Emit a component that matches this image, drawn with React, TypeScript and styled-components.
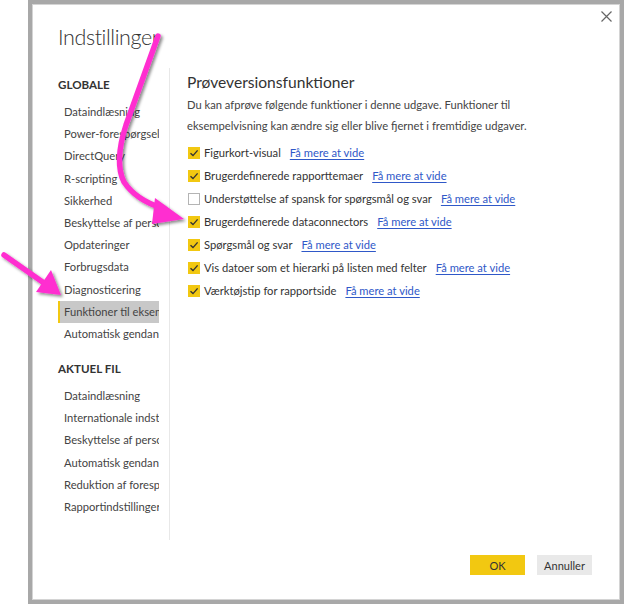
import React from "react";
import styled, { createGlobalStyle } from "styled-components";

const Global = createGlobalStyle`
  html, body { margin: 0; padding: 0; background: #ffffff; }
  body { font-family: "Lato", "Open Sans", sans-serif; color: #333; }
  * { box-sizing: border-box; }
`;

const Page = styled.div`
  position: relative;
  width: 624px;
  height: 605px;
  display: flex;
  align-items: flex-start;
  padding-left: 28px;
  overflow: hidden;
`;

const Dialog = styled.div`
  width: 596px;
  height: 604px;
  border: 4px solid #a8a8a8;
  box-shadow: inset 1px 1px 0 #d4d4d4, inset -1px -1px 0 #d4d4d4;
  background: #fff;
  display: flex;
  flex-direction: column;
`;

const Header = styled.div`
  display: flex;
  justify-content: space-between;
  align-items: flex-start;
  padding: 0 8px 0 26px;
  height: 64px;
`;

const Title = styled.h1`
  margin: 18px 0 0 0;
  font-size: 21.5px;
  line-height: 30px;
  font-weight: 300;
  letter-spacing: -0.4px;
  color: #333;
`;

const Close = styled.button`
  border: none;
  background: transparent;
  padding: 0;
  margin-top: 6px;
  width: 12px;
  height: 12px;
  display: flex;
  align-items: center;
  justify-content: center;
  cursor: pointer;
`;

const Body = styled.div`
  display: flex;
  flex: 1;
  padding-left: 26px;
`;

const Nav = styled.nav`
  width: 101px;
  display: flex;
  flex-direction: column;
  padding-top: 6px;
`;

const SectionTitle = styled.div<{ $gap: number }>`
  font-size: 11.6px;
  font-weight: 700;
  color: #333;
  height: 22px;
  line-height: 22px;
  margin-top: ${(p) => p.$gap}px;
  margin-bottom: 5px;
`;

const NavItem = styled.div<{ $active?: boolean }>`
  height: 22px;
  line-height: 22px;
  font-size: 11.2px;
  color: #444;
  white-space: nowrap;
  overflow: hidden;
  padding-left: ${(p) => (p.$active ? 4 : 6)}px;
  background: ${(p) => (p.$active ? "#c8c8c8" : "transparent")};
  border-left: ${(p) => (p.$active ? "2px solid #f2c811" : "none")};
  margin-bottom: 0.2px;
`;

const Divider = styled.div`
  width: 1px;
  background: #e8e8e8;
  margin-left: 10px;
  align-self: flex-start;
  height: 472px;
`;

const Content = styled.section`
  flex: 1;
  padding-left: 17px;
  padding-top: 2px;
`;

const Heading = styled.h2`
  margin: 0;
  font-size: 15.6px;
  font-weight: 400;
  line-height: 24px;
  color: #333;
`;

const Para = styled.p`
  margin: 0 0 5px 0;
  font-size: 11.2px;
  line-height: 21px;
  color: #444;
`;

const OptionList = styled.div`
  display: flex;
  flex-direction: column;
`;

const Option = styled.label`
  display: flex;
  align-items: center;
  height: 23px;
  font-size: 11.2px;
  color: #333;
`;

const Box = styled.span<{ $checked: boolean }>`
  width: 12px;
  height: 12px;
  margin-left: 1px;
  margin-right: 4px;
  display: flex;
  align-items: center;
  justify-content: center;
  background: ${(p) => (p.$checked ? "#f2c811" : "#fff")};
  border: 1px solid ${(p) => (p.$checked ? "#f2c811" : "#b4b4b4")};
`;

const LearnMore = styled.a`
  margin-left: 9px;
  color: #2f58c8;
  text-decoration: underline;
  text-underline-offset: 2px;
  cursor: pointer;
`;

const Footer = styled.div`
  display: flex;
  justify-content: flex-end;
  gap: 12px;
  padding: 0 28px 25px 0;
`;

const Button = styled.button<{ $primary?: boolean }>`
  width: 55px;
  height: 20px;
  border: none;
  font-family: "Lato", sans-serif;
  font-size: 11px;
  color: #333;
  background: ${(p) => (p.$primary ? "#f2c811" : "#e9e9e9")};
  cursor: pointer;
`;

const Overlay = styled.svg`
  position: absolute;
  left: 0;
  top: 0;
  pointer-events: none;
`;

const globalItems = [
  "Dataindlæsning",
  "Power-forespørgsel-editor",
  "DirectQuery",
  "R-scripting",
  "Sikkerhed",
  "Beskyttelse af personlige oplysninger",
  "Opdateringer",
  "Forbrugsdata",
  "Diagnosticering",
  "Funktioner til eksempelvisning",
  "Automatisk gendannelse",
];

const fileItems = [
  "Dataindlæsning",
  "Internationale indstillinger",
  "Beskyttelse af personlige oplysninger",
  "Automatisk gendannelse",
  "Reduktion af forespørgsler",
  "Rapportindstillinger",
];

const options = [
  { label: "Figurkort-visual", checked: true },
  { label: "Brugerdefinerede rapporttemaer", checked: true },
  { label: "Understøttelse af spansk for spørgsmål og svar", checked: false },
  { label: "Brugerdefinerede dataconnectors", checked: true },
  { label: "Spørgsmål og svar", checked: true },
  { label: "Vis datoer som et hierarki på listen med felter", checked: true },
  { label: "Værktøjstip for rapportside", checked: true },
];

const Check = () => (
  <svg width="10" height="10" viewBox="0 0 10 10">
    <path d="M1.5 5.2 L4 7.6 L8.6 2.4" fill="none" stroke="#333" strokeWidth="1.4" />
  </svg>
);

export default function App() {
  return (
    <>
      <Global />
      <Page>
        <Dialog>
          <Header>
            <Title>Indstillinger</Title>
            <Close aria-label="Luk">
              <svg width="11" height="11" viewBox="0 0 11 11">
                <path d="M0.5 0.5 L10.5 10.5 M10.5 0.5 L0.5 10.5" stroke="#666" strokeWidth="1.2" />
              </svg>
            </Close>
          </Header>
          <Body>
            <Nav>
              <SectionTitle $gap={0}>GLOBALE</SectionTitle>
              {globalItems.map((t, i) => (
                <NavItem key={t} $active={i === 9}>
                  {t}
                </NavItem>
              ))}
              <SectionTitle $gap={13}>AKTUEL FIL</SectionTitle>
              {fileItems.map((t) => (
                <NavItem key={t}>{t}</NavItem>
              ))}
            </Nav>
            <Divider />
            <Content>
              <Heading>Prøveversionsfunktioner</Heading>
              <Para>
                Du kan afprøve følgende funktioner i denne udgave. Funktioner til
                <br />
                eksempelvisning kan ændre sig eller blive fjernet i fremtidige udgaver.
              </Para>
              <OptionList>
                {options.map((o) => (
                  <Option key={o.label}>
                    <Box $checked={o.checked}>{o.checked && <Check />}</Box>
                    {o.label}
                    <LearnMore>Få mere at vide</LearnMore>
                  </Option>
                ))}
              </OptionList>
            </Content>
          </Body>
          <Footer>
            <Button $primary>OK</Button>
            <Button>Annuller</Button>
          </Footer>
        </Dialog>
        <Overlay width="624" height="605" viewBox="0 0 624 605">
          <defs>
            <filter id="sh" x="-20%" y="-20%" width="140%" height="140%">
              <feDropShadow dx="2" dy="2" stdDeviation="1.5" floodColor="#000" floodOpacity="0.45" />
            </filter>
          </defs>
          <g filter="url(#sh)" fill="none" stroke="#ff2fd0" strokeWidth="5.5" strokeLinecap="round">
            <path d="M158 36 L126 125 Q114 162 124 182 Q136 200 162 208" />
            <path d="M4 255 L44 283" />
          </g>
          <g filter="url(#sh)" fill="#ff2fd0">
            <polygon points="184,219 155,198 152,224" />
            <polygon points="61,295 36,292 51,270" />
          </g>
        </Overlay>
      </Page>
    </>
  );
}
